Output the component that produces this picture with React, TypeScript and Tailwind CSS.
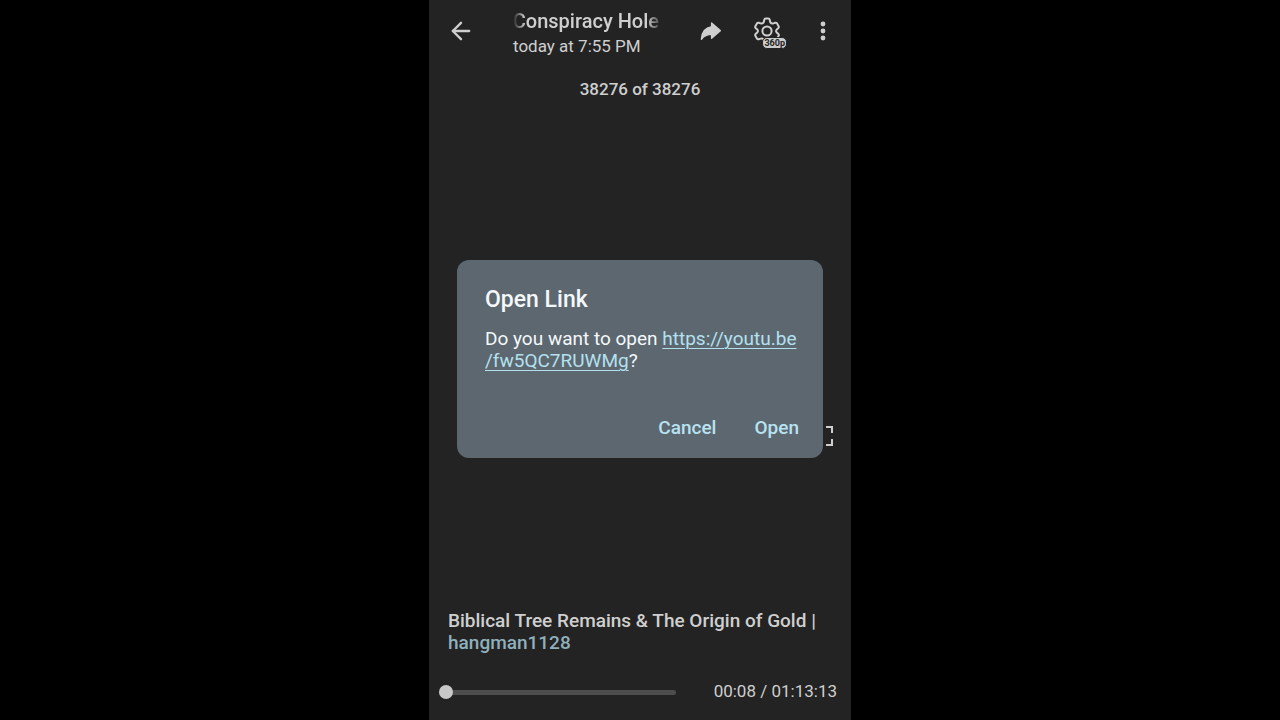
import { ArrowLeft } from 'lucide-react'
import { useState } from 'react'

const DURATION = 4393

function formatTime(seconds: number) {
  const pad = (n: number) => String(n).padStart(2, '0')
  const h = Math.floor(seconds / 3600)
  const m = Math.floor((seconds % 3600) / 60)
  const time = `${pad(m)}:${pad(seconds % 60)}`
  return h > 0 ? `${pad(h)}:${time}` : time
}

function ShareIcon() {
  return (
    <svg width="22" height="20" viewBox="0 0 22 20" aria-hidden>
      <path
        d="M11.6 2 20.3 9.6 11.6 17.2V13.3C7 13.3 4.2 14.6 1.4 18.2 1.8 11.6 5.2 6.8 11.6 5.8Z"
        fill="currentColor"
        stroke="currentColor"
        strokeWidth="1.4"
        strokeLinejoin="round"
      />
    </svg>
  )
}

function GearIcon() {
  return (
    <svg
      width="28"
      height="28"
      viewBox="-14 -14 28 28"
      fill="none"
      stroke="currentColor"
      strokeWidth="2"
      strokeLinejoin="round"
      aria-hidden
    >
      <path d="M-3.2-8.9-2.8-11Q-2.5-12.4-1.2-12.4H1.2Q2.5-12.4 2.8-11L3.2-8.9Q4.5-6.9 6.4-7.6L8.2-8.2Q9.4-8.6 10.1-7.4L11.6-4.8Q12.2-3.6 11.2-2.7L9.7-1.5Q8.5 0 9.7 1.5L11.2 2.7Q12.2 3.6 11.6 4.8L10.1 7.4Q9.4 8.6 8.2 8.2L6.4 7.6Q4.5 6.9 3.2 8.9L2.8 11Q2.5 12.4 1.2 12.4H-1.2Q-2.5 12.4-2.8 11L-3.2 8.9Q-4.5 6.9-6.4 7.6L-8.2 8.2Q-9.4 8.6-10.1 7.4L-11.6 4.8Q-12.2 3.6-11.2 2.7L-9.7 1.5Q-8.5 0-9.7-1.5L-11.2-2.7Q-12.2-3.6-11.6-4.8L-10.1-7.4Q-9.4-8.6-8.2-8.2L-6.4-7.6Q-4.5-6.9-3.2-8.9Z" />
      <circle r="4.6" />
    </svg>
  )
}

function MoreIcon() {
  return (
    <svg width="6" height="20" viewBox="0 0 6 20" fill="currentColor" aria-hidden>
      <circle cx="3" cy="3" r="2.4" />
      <circle cx="3" cy="10" r="2.4" />
      <circle cx="3" cy="17" r="2.4" />
    </svg>
  )
}

function FullscreenIcon() {
  return (
    <svg
      width="20"
      height="20"
      viewBox="0 0 20 20"
      fill="none"
      stroke="currentColor"
      strokeWidth="2"
      aria-hidden
    >
      <path d="M1 7V1H7M13 1H19V7M19 13V19H13M7 19H1V13" />
    </svg>
  )
}

function Header() {
  return (
    <header className="flex h-[62px] items-center">
      <button
        type="button"
        aria-label="Back"
        className="flex h-14 w-16 shrink-0 items-center justify-center"
      >
        <ArrowLeft className="size-7" aria-hidden />
      </button>
      <div className="ml-5 mr-5 min-w-0 flex-1 pt-1">
        <h1 className="flex justify-end overflow-hidden pr-1 text-[20px] leading-[26px] font-medium whitespace-nowrap [mask-image:linear-gradient(to_right,transparent,black_12px,black_calc(100%-16px),transparent)]">
          Conspiracy Hole
        </h1>
        <p className="text-[17px] leading-6">today at 7:55 PM</p>
      </div>
      <button
        type="button"
        aria-label="Share"
        className="flex h-14 w-14 shrink-0 items-center justify-center"
      >
        <ShareIcon />
      </button>
      <button
        type="button"
        aria-label="Quality"
        className="relative flex h-14 w-14 shrink-0 items-center justify-center"
      >
        <GearIcon />
        <span className="absolute right-2 bottom-[10px] rounded-[5px] border border-[#232323] bg-[#cbcbcb] px-px text-[9px] leading-[10px] font-bold text-[#232323]">
          360p
        </span>
      </button>
      <button
        type="button"
        aria-label="More options"
        className="flex h-14 w-14 shrink-0 items-center justify-center"
      >
        <MoreIcon />
      </button>
    </header>
  )
}

function PlayerControls() {
  const [position, setPosition] = useState(8)

  return (
    <div className="flex h-14 items-center gap-[38px] pr-[14px] pl-[10px]">
      <input
        type="range"
        aria-label="Seek"
        min={0}
        max={DURATION}
        value={position}
        onChange={(e) => setPosition(Number(e.target.value))}
        className="h-[14px] min-w-0 flex-1 appearance-none bg-transparent [&::-webkit-slider-runnable-track]:h-[5px] [&::-webkit-slider-runnable-track]:rounded-full [&::-webkit-slider-runnable-track]:bg-[#4d4d4d] [&::-webkit-slider-thumb]:-mt-[5px] [&::-webkit-slider-thumb]:size-[14px] [&::-webkit-slider-thumb]:appearance-none [&::-webkit-slider-thumb]:rounded-full [&::-webkit-slider-thumb]:bg-[#c8c8c8]"
      />
      <span className="shrink-0 pb-0.5 text-[17px] leading-6">
        {formatTime(position)} / {formatTime(DURATION)}
      </span>
    </div>
  )
}

function OpenLinkDialog() {
  return (
    <div className="fixed inset-0 flex items-center justify-center pb-0.5">
      <div
        role="dialog"
        aria-labelledby="open-link-title"
        className="w-[366px] max-w-full rounded-xl bg-[#5c6770] pt-6 pr-6 pb-2 pl-7 text-[#f4f8fa]"
      >
        <h2 id="open-link-title" className="text-[23px] leading-8 font-medium">
          Open Link
        </h2>
        <p className="mt-3 text-[19px] leading-[22px]">
          Do you want to open{' '}
          <a
            href="https://youtu.be/fw5QC7RUWMg"
            className="text-[#b4e0ee] underline decoration-1 underline-offset-3"
          >
            https://youtu.be
            <wbr />
            /fw5QC7RUWMg
          </a>
          ?
        </p>
        <div className="-mr-[14px] mt-[34px] flex justify-end gap-[10px] text-[19px] leading-7 font-medium text-[#b9e2f0]">
          <button type="button" className="px-[14px] py-2">
            Cancel
          </button>
          <button type="button" className="px-[14px] py-2">
            Open
          </button>
        </div>
      </div>
    </div>
  )
}

export default function App() {
  return (
    <div className="min-h-screen bg-black font-['Roboto',sans-serif]">
      <div className="mx-auto flex min-h-screen w-full max-w-[422px] flex-col bg-[#232323] text-[#cfcfcf]">
        <Header />
        <p className="pt-[15px] text-center text-[17px] leading-6 font-medium">
          38276 of 38276
        </p>
        <main className="flex flex-1 flex-col justify-center">
          <div className="flex aspect-video items-end justify-end">
            <button
              type="button"
              aria-label="Full screen"
              className="mr-2 mb-[18px] p-[10px]"
            >
              <FullscreenIcon />
            </button>
          </div>
        </main>
        <footer>
          <p className="px-[19px] pb-[10px] text-[19px] leading-[22px] font-medium">
            Biblical Tree Remains &amp; The Origin of Gold |{' '}
            <a href="#hangman1128" className="text-[#8fb0bc]">
              hangman1128
            </a>
          </p>
          <PlayerControls />
        </footer>
      </div>
      <OpenLinkDialog />
    </div>
  )
}
